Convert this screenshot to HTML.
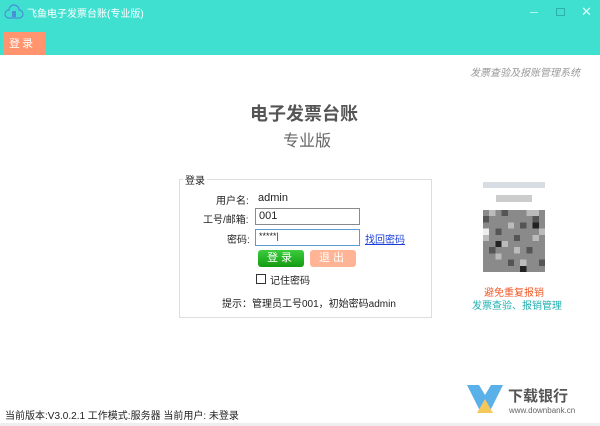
<!DOCTYPE html>
<html><head><meta charset="utf-8"><style>
*{margin:0;padding:0;box-sizing:border-box}
body{width:600px;height:426px;overflow:hidden;background:#fff;position:relative;font-family:"Liberation Sans","Noto Sans CJK SC",sans-serif;font-size:11px;color:#222}
.a{position:absolute;white-space:nowrap}
.top{position:absolute;left:0;top:0;width:600px;height:55px;background:#40e0d0}
.in{position:absolute;height:17px;border:1px solid #8a8a8a;background:#fff;font-size:11px;padding:1px 3px}
.btn{position:absolute;height:17px;width:46px;border-radius:3px;color:#fff;text-align:center;font-size:11px;line-height:17px;letter-spacing:3px}
</style></head><body>
<div class="top"></div>
<svg class="a" style="left:4px;top:3px" width="20" height="20" viewBox="0 0 20 20"><path d="M5 15a4 4 0 0 1 0-8a5 5 0 0 1 10 0a4 4 0 0 1 0 8z" fill="none" stroke="#4a90d9" stroke-width="1.2"/><rect x="8" y="8" width="4" height="6" fill="#4a90d9"/></svg>
<div class="a" style="left:27px;top:5px;color:#fff;font-size:10px">飞鱼电子发票台账(专业版)</div>
<div class="a" style="left:530px;top:12px;width:8px;height:1px;background:#b0f5ee"></div>
<div class="a" style="left:556px;top:8px;width:9px;height:8px;border:1px solid #2fb0a6"></div>
<div class="a" style="left:581px;top:4px;color:#e0fffb;font-size:13px">✕</div>
<div class="a" style="left:3px;top:32px;width:42px;height:23px;background:#ff946e;color:#fff;font-size:11px;line-height:25px;padding-left:6px;letter-spacing:2px">登录</div>
<div class="a" style="left:470px;top:64px;color:#999;font-size:10px;font-style:italic">发票查验及报账管理系统</div>
<div class="a" style="left:250px;top:100px;color:#555;font-size:18px;font-weight:bold">电子发票台账</div>
<div class="a" style="left:283px;top:127px;color:#666;font-size:16px">专业版</div>
<div class="a" style="left:179px;top:179px;width:253px;height:139px;border:1px solid #ddd"></div>
<div class="a" style="left:183px;top:172px;background:#fff;padding:0 2px;font-size:10px">登录</div>
<div class="a" style="left:216px;top:192px;font-size:10px">用户名:</div>
<div class="a" style="left:258px;top:192px;font-size:11px">admin</div>
<div class="a" style="left:203px;top:211px;font-size:10px">工号/邮箱:</div>
<div class="in" style="left:255px;top:208px;width:105px">001</div>
<div class="a" style="left:227px;top:231px;font-size:10px">密码:</div>
<div class="in" style="left:255px;top:229px;width:105px;border-color:#5a9bd5;font-size:9px">*****|</div>
<div class="a" style="left:365px;top:231px;color:#1a3fd6;font-size:10px;text-decoration:underline">找回密码</div>
<div class="btn" style="left:258px;top:250px;background:linear-gradient(#3dcc3d,#139b13)">登录</div>
<div class="btn" style="left:310px;top:250px;background:#ffb595">退出</div>
<div class="a" style="left:256px;top:274px;width:10px;height:10px;border:1px solid #333"></div>
<div class="a" style="left:270px;top:272px;font-size:10px">记住密码</div>
<div class="a" style="left:222px;top:295px;font-size:10px">提示：管理员工号001，初始密码admin</div>
<div class="a" style="left:483px;top:182px;width:62px;height:6px;background:#d8dde3"></div>
<div class="a" style="left:496px;top:195px;width:36px;height:7px;background:#ccc"></div>
<svg class="a" style="left:483px;top:210px" width="62" height="62" viewBox="0 0 10 10" shape-rendering="crispEdges">
<rect width="10" height="10" fill="#8a8a8a"/>
<g fill="#555"><rect x="0" y="1" width="1" height="1"/><rect x="3" y="0" width="1" height="1"/><rect x="8" y="1" width="1" height="1"/><rect x="2" y="3" width="1" height="1"/><rect x="5" y="4" width="1" height="1"/><rect x="1" y="6" width="1" height="1"/><rect x="7" y="6" width="1" height="1"/><rect x="4" y="8" width="1" height="1"/><rect x="6" y="2" width="1" height="1"/><rect x="9" y="8" width="1" height="1"/></g>
<g fill="#bbb"><rect x="1" y="0" width="1" height="1"/><rect x="4" y="2" width="1" height="1"/><rect x="7" y="0" width="2" height="1"/><rect x="0" y="4" width="1" height="1"/><rect x="3" y="5" width="1" height="1"/><rect x="8" y="4" width="1" height="1"/><rect x="2" y="7" width="1" height="1"/><rect x="6" y="8" width="1" height="1"/><rect x="9" y="3" width="1" height="1"/><rect x="5" y="6" width="1" height="1"/></g>
<g fill="#222"><rect x="8" y="2" width="1" height="1"/><rect x="2" y="5" width="1" height="1"/><rect x="6" y="9" width="1" height="1"/></g>
<rect x="0" y="3" width="1" height="1" fill="#eee"/></svg>
<div class="a" style="left:484px;top:284px;color:#f05a28;font-size:10px">避免重复报销</div>
<div class="a" style="left:472px;top:297px;color:#20b0b0;font-size:10px">发票查验、报销管理</div>
<svg class="a" style="left:465px;top:383px" width="40" height="34" viewBox="0 0 40 34"><path d="M2 2h12l6 10 6-10h12L24 30h-8z" fill="#5ab0e8"/><path d="M20 16l-8 14h16z" fill="#f5c85a"/></svg>
<div class="a" style="left:508px;top:385px;color:#555;font-size:15px;font-weight:bold">下载银行</div>
<div class="a" style="left:509px;top:406px;color:#666;font-size:8px">www.downbank.cn</div>
<div class="a" style="left:5px;top:407px;font-size:10px">当前版本:V3.0.2.1  工作模式:服务器  当前用户: 未登录</div>
<div class="a" style="left:0;top:423px;width:600px;height:3px;background:#eee"></div>
</body></html>
